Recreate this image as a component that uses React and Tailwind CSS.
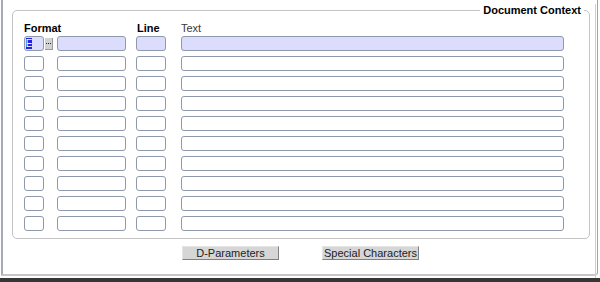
const rows = Array.from({ length: 10 }, (_, i) => i);

function Box({ className = "", active, children }) {
  return (
    <div
      className={`h-[15px] rounded-[3px] border border-[#8e99ab] ${
        active ? "bg-[#dcdcfc]" : "bg-white"
      } ${className}`}
    >
      {children}
    </div>
  );
}

function Row({ first }) {
  return (
    <div className="flex">
      <div className="flex w-[33px]">
        <Box active={first} className="w-[20px] flex items-center pl-[1px]">
          {first && (
            <span className="flex h-[11px] w-[6px] items-center justify-center bg-[#2424e0] text-[10px] leading-[11px] text-white">
              E
            </span>
          )}
        </Box>
        {first && (
          <div className="ml-[1px] mt-[2px] flex h-[12px] w-[8px] items-center justify-center gap-[1px] border-b border-r border-b-[#9a9a9a] border-r-[#9a9a9a] bg-[#d2d2d2]">
            <span className="h-[1px] w-[1px] bg-[#222]" />
            <span className="h-[1px] w-[1px] bg-[#222]" />
            <span className="h-[1px] w-[1px] bg-[#222]" />
          </div>
        )}
      </div>
      <Box active={first} className="w-[69px]" />
      <Box active={first} className="ml-[10px] w-[30px]" />
      <Box active={first} className="ml-[15px] w-[383px]" />
    </div>
  );
}

export default function App() {
  return (
    <div className="flex h-[282px] w-[600px] flex-col bg-white font-['Liberation_Sans',Arial,sans-serif] text-[11px] text-black">
      <div className="ml-[1px] mr-[2px] h-[276px] rounded-br-[4px] border-b-2 border-l-2 border-r border-b-[#c6c6c6] border-l-[#a6a8bc] border-r-[#a4a4a4]">
        <div className="mr-[1px] h-full border-r border-r-[#d0d0d0]">
          <fieldset className="ml-[9px] mt-[4px] w-[578px] rounded-[5px] border border-[#c4c4c4] pb-[7px]">
            <legend className="ml-auto mr-[5px] px-[3px] text-[11px] font-bold leading-[13px]">
              Document Context
            </legend>
            <div className="mt-[5px] flex h-[13px] pl-[11px] leading-[13px]">
              <span className="w-[113px] font-bold">Format</span>
              <span className="w-[44px] font-bold">Line</span>
              <span className="text-[#3a3a3a]">Text</span>
            </div>
            <div className="mt-[1px] flex flex-col gap-[5px] pl-[11px]">
              {rows.map((i) => (
                <Row key={i} first={i === 0} />
              ))}
            </div>
          </fieldset>
          <div className="mt-[7px] flex pl-[179px]">
            <button className="h-[14px] w-[97px] border border-b-[#808080] border-l-[#e4e4e4] border-r-[#808080] border-t-[#e4e4e4] bg-[#d6d6d6] text-[11px] leading-[12px] text-[#222]">
              D-Parameters
            </button>
            <button className="ml-[43px] h-[14px] w-[97px] border border-b-[#808080] border-l-[#e4e4e4] border-r-[#808080] border-t-[#e4e4e4] bg-[#d6d6d6] text-[11px] leading-[12px] text-[#222]">
              Special Characters
            </button>
          </div>
        </div>
      </div>
      <div className="mt-[2px] h-[4px] bg-[#363636]" />
    </div>
  );
}
